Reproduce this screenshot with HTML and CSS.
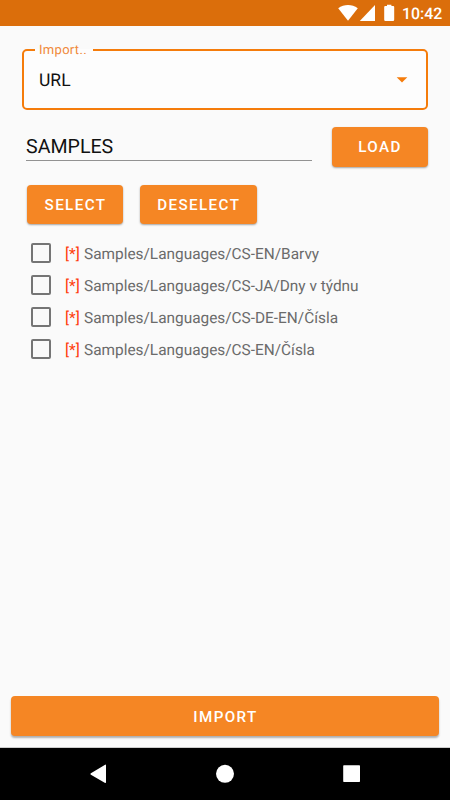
FILE: index.html
```html
<!DOCTYPE html>
<html lang="en">
<head>
<meta charset="utf-8">
<title>Import</title>
<link rel="stylesheet" href="styles.css">
</head>
<body>
<div class="screen">
  <header class="status">
    <svg class="status-icons" width="60" height="26" viewBox="0 0 60 26" fill="#fff">
      <path d="M.2 8.3C6.2 3.9 13.800 3.900 19.800 8.300L10 20.700Z"/>
      <path d="M37 5V21H21.800Z"/>
      <path d="M47.200 6h1.800V4.800h4.400V6h1.800q1 0 1 1v12.800q0 1.200-1.200 1.200h-7.600q-1.200 0-1.200-1.200V7q0-1 1-1z"/>
    </svg>
    <span class="clock">10:42</span>
  </header>
  <main class="content">
    <fieldset class="picker">
      <legend>Import..</legend>
      <div class="picker-row">
        <span class="picker-value">URL</span>
        <svg width="12" height="6" viewBox="0 0 12 6" fill="#f57c0b"><path d="M.7.300h10.600L6 5.600z"/></svg>
      </div>
    </fieldset>
    <div class="source">
      <div class="source-name"><span>SAMPLES</span></div>
      <button class="btn load">LOAD</button>
    </div>
    <div class="selection">
      <button class="btn select">SELECT</button>
      <button class="btn deselect">DESELECT</button>
    </div>
    <ul class="list">
      <li><i class="box"></i><span class="mark">[*]</span><span class="path">Samples/Languages/CS-EN/Barvy</span></li>
      <li><i class="box"></i><span class="mark">[*]</span><span class="path">Samples/Languages/CS-JA/Dny v týdnu</span></li>
      <li><i class="box"></i><span class="mark">[*]</span><span class="path">Samples/Languages/CS-DE-EN/Čísla</span></li>
      <li><i class="box"></i><span class="mark">[*]</span><span class="path">Samples/Languages/CS-EN/Čísla</span></li>
    </ul>
  </main>
  <div class="action"><button class="btn import">IMPORT</button></div>
  <nav class="navbar">
    <svg width="450" height="52" viewBox="0 0 450 52" fill="#fff">
      <path d="M90.900 25.200 104.700 16.900q1.300-.8 1.300.7v16.500q0 1.500-1.300.7L90.900 26.800q-1.200-.8 0-1.600z"/>
      <circle cx="225" cy="25.800" r="9"/>
      <rect x="343.200" y="17.200" width="16.800" height="16.800" rx=".7"/>
    </svg>
  </nav>
</div>
</body>
</html>
```

FILE: styles.css
```css
* { box-sizing: border-box; }

body {
  margin: 0;
  font-family: Roboto, "Liberation Sans", sans-serif;
  text-rendering: geometricPrecision;
}

.screen {
  display: flex;
  flex-direction: column;
  width: 450px;
  height: 800px;
  overflow: hidden;
  background: #fafafa;
}

.status {
  display: flex;
  flex: none;
  height: 26px;
  padding-left: 338px;
  background: #db6e0b;
}

.status-icons { flex: none; }

.clock {
  margin-left: 4px;
  color: #fff;
  font-size: 15.900px;
  font-weight: 500;
  line-height: 28px;
}

.content {
  flex: 1;
  padding: 15px 22px 0;
}

.picker {
  height: 68.500px;
  margin: 0;
  padding: 0 18px 0 15px;
  border: 2px solid #f57c0b;
  border-radius: 5px;
  background: #fdfdfd;
}

.picker legend {
  height: 17px;
  margin-left: -4px;
  padding: 0 6px 0 4px;
  color: #f0893a;
  font-size: 13px;
  line-height: 20px;
  letter-spacing: .3px;
}

.picker-row {
  display: flex;
  align-items: center;
  justify-content: space-between;
  height: 43px;
  color: #111;
  font-size: 17.500px;
}

.picker-value { padding-top: 2px; }

.source {
  display: flex;
  justify-content: space-between;
  height: 40px;
  margin: 17.500px 0 0 4px;
}

.source-name {
  width: 286px;
  height: 34px;
  border-bottom: 1px solid #929292;
  color: #111;
  font-size: 19.600px;
  line-height: 40px;
}

.btn {
  height: 39.500px;
  padding: 1px 0 0 1px;
  border: 0;
  border-radius: 4px;
  background: #f58624;
  box-shadow: 0 1px 2px rgba(0, 0, 0, .35);
  color: #fff;
  font-family: inherit;
  font-size: 15.200px;
  font-weight: 500;
  letter-spacing: 1.400px;
}

.load, .select { width: 96px; }
.load { padding-left: 0; }
.deselect { width: 117.500px; }

.selection {
  display: flex;
  gap: 16.500px;
  margin: 17.500px 0 0 5px;
}

.list {
  margin: 12.500px 0 0;
  padding: 0 0 0 9px;
  list-style: none;
}

.list li {
  display: flex;
  align-items: center;
  height: 32px;
  color: #6b6b6b;
  font-size: 15.400px;
}

.box {
  flex: none;
  width: 20px;
  height: 20px;
  margin-right: 14px;
  border: 2px solid #757575;
  border-radius: 2px;
}

.mark,
.path { padding-top: 2px; }

.mark {
  width: 19px;
  color: #ff3d0d;
}

.action {
  flex: none;
  height: 52px;
  padding: 0 11px;
  border-bottom: 1px solid #ccc;
}

.import {
  width: 100%;
  height: 40px;
  padding-top: 1px;
  box-shadow: 0 2px 2px rgba(0, 0, 0, .3);
}

.navbar {
  flex: none;
  height: 52px;
  background: #000;
}

.navbar svg { display: block; }
```
